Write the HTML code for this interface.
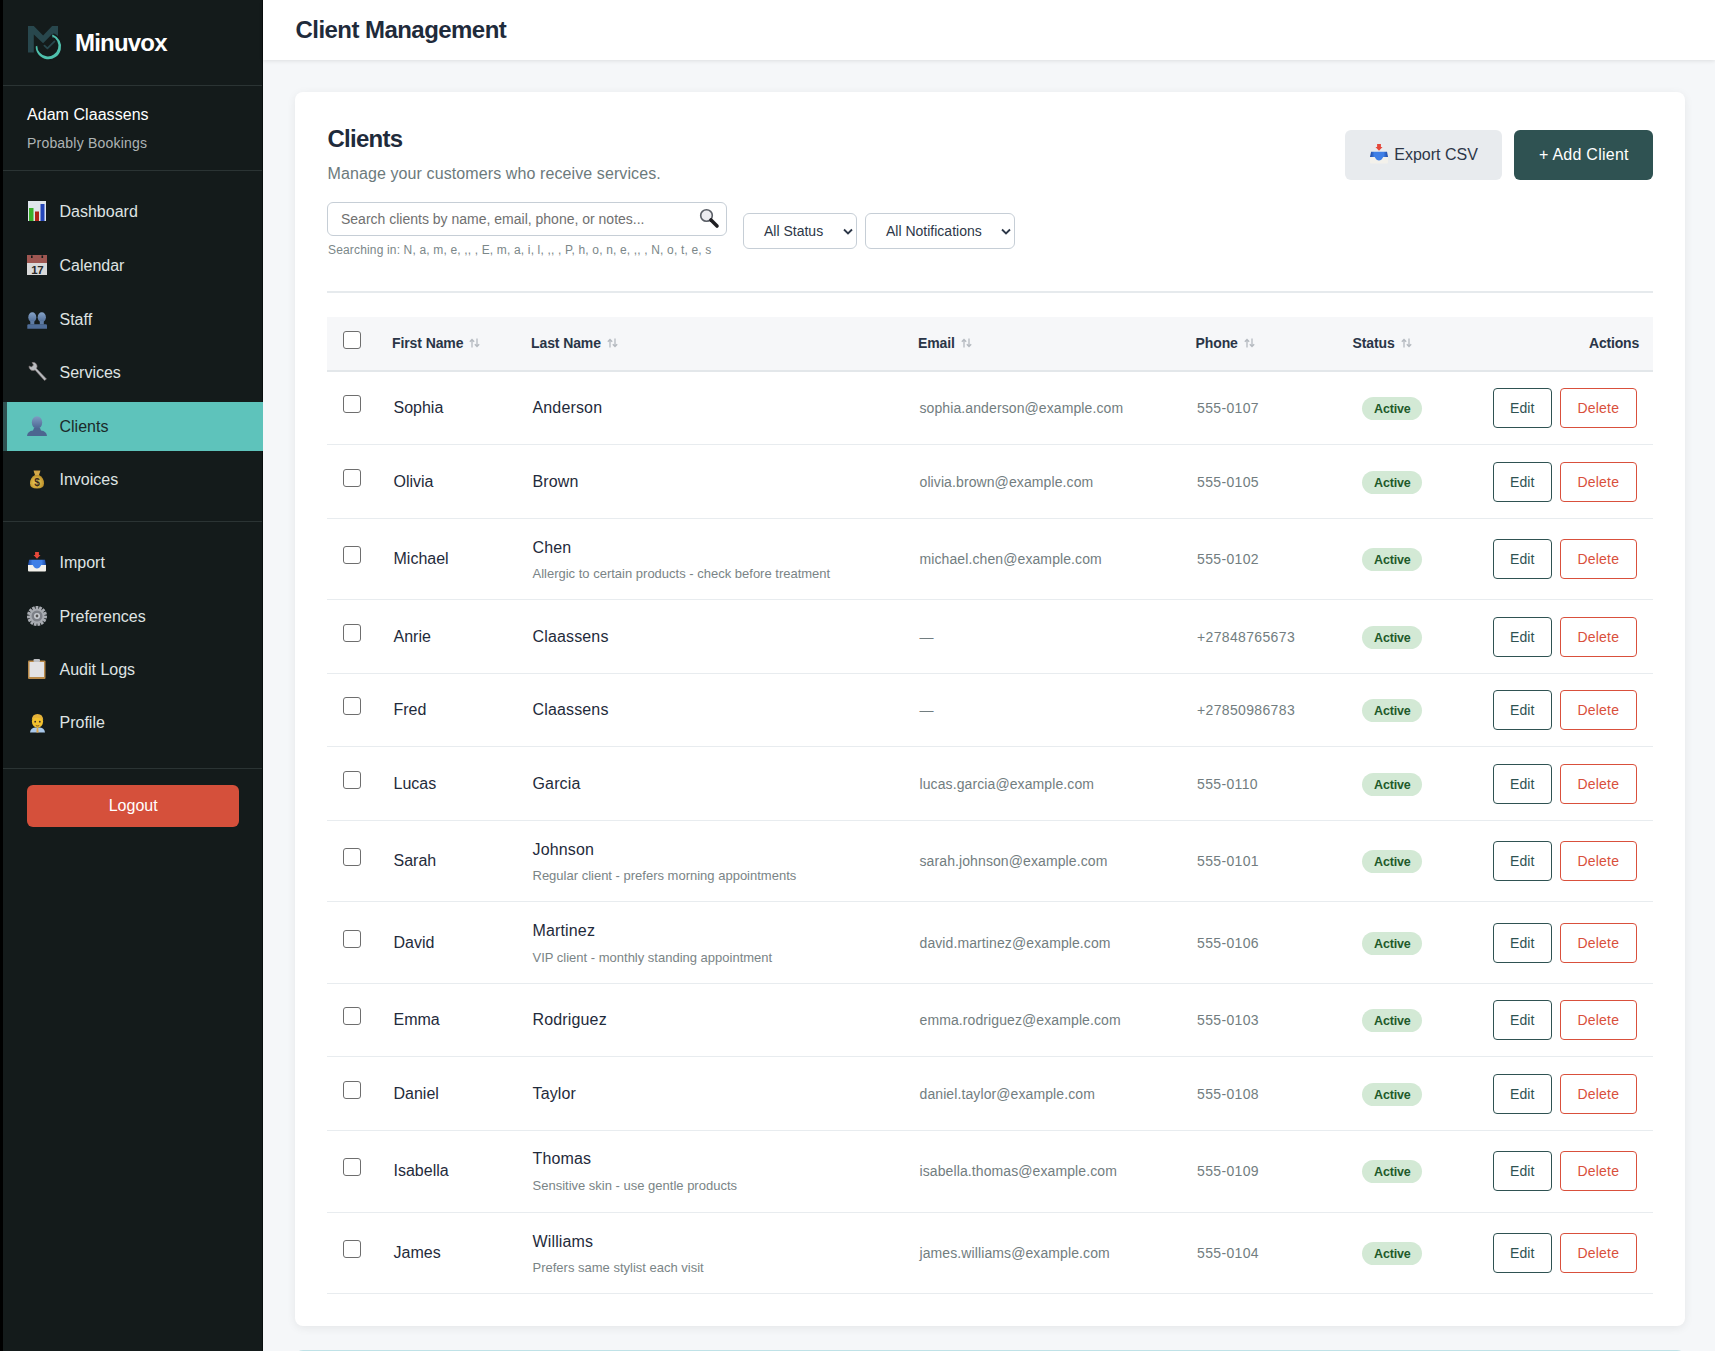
<!DOCTYPE html><html><head><meta charset="utf-8"><title>Client Management</title><style>
*{box-sizing:border-box;margin:0;padding:0}
html,body{width:1715px;height:1351px;overflow:hidden;background:#f5f7f9;font-family:"Liberation Sans",sans-serif}
.t{position:absolute;white-space:nowrap}
.r{position:absolute;display:block}
</style></head><body>
<div class="r" style="left:0px;top:0px;width:3px;height:1351px;background:#000"></div>
<div class="r" style="left:3px;top:0px;width:260px;height:1351px;background:#141b1b"></div>
<div class="r" style="left:262px;top:0px;width:1px;height:1351px;background:#0a0f0f"></div>
<svg class="r" style="left:27px;top:25px;overflow:visible" width="40" height="40" viewBox="0 0 40 40">
<path d="M1 1 H6.8 L16.1 10.5 L25.1 1 H31 V13 H25.1 V9.1 L16.1 18.2 L6.8 9.4 V27.5 H1 Z" fill="#28474d"/>
<path d="M8.7 21.6 A12.7 12.7 0 1 0 26.03 9.77" fill="none" stroke="#141b1b" stroke-width="3"/>
<path d="M8.7 21.6 A12.7 12.7 0 1 0 26.03 9.77 L24.67 10.93 A10.6 10.6 0 1 1 10.2 20.8 Z" fill="#4fc1ad"/>
<path d="M17.43 20.69 L20.39 23.35 L27.5 16.4" fill="none" stroke="#28474d" stroke-width="1.8" stroke-linecap="round" stroke-linejoin="round"/>
</svg>
<div class="t " style="left:75px;top:31px;font-size:24px;line-height:24px;color:#ffffff;font-weight:700;letter-spacing:-0.8px">Minuvox</div>
<div class="r" style="left:3px;top:85px;width:259px;height:1px;background:#2b3434"></div>
<div class="t " style="left:27px;top:107px;font-size:16px;line-height:16px;color:#ffffff;font-weight:400;letter-spacing:0.05px">Adam Claassens</div>
<div class="t " style="left:27px;top:136px;font-size:14px;line-height:14px;color:#aeb4b4;font-weight:400;letter-spacing:0.2px">Probably Bookings</div>
<div class="r" style="left:3px;top:170px;width:259px;height:1px;background:#2b3434"></div>
<svg class="r" style="left:27px;top:201px;overflow:visible" width="20" height="20" viewBox="0 0 20 20">
<rect x="1" y="0" width="18" height="20" fill="#dfe5ec"/>
<rect x="2" y="7" width="4.5" height="13" fill="#3bb02b"/>
<rect x="8" y="10.5" width="4" height="9.5" fill="#b02418"/>
<rect x="13.5" y="3" width="4" height="17" fill="#2445b8"/>
</svg>
<div class="t " style="left:59.5px;top:204px;font-size:16px;line-height:16px;color:#dfe3e3;font-weight:400;">Dashboard</div>
<svg class="r" style="left:27px;top:255px;overflow:visible" width="20" height="20" viewBox="0 0 20 20">
<rect x="0" y="0" width="20" height="20" fill="#d9d9d9"/>
<rect x="0" y="0" width="20" height="8" fill="#9f5752"/>
<rect x="4" y="0.5" width="1.6" height="2.5" fill="#151c1c"/>
<rect x="14.5" y="0.5" width="1.6" height="2.5" fill="#151c1c"/>
<text x="10.3" y="18.5" text-anchor="middle" font-family="Liberation Sans" font-weight="bold" font-size="11.5" fill="#2a2a2a" letter-spacing="-0.3">17</text>
</svg>
<div class="t " style="left:59.5px;top:258px;font-size:16px;line-height:16px;color:#dfe3e3;font-weight:400;">Calendar</div>
<svg class="r" style="left:27px;top:309px;overflow:visible" width="20" height="20" viewBox="0 0 20 20">
<defs><linearGradient id="gs" x1="0" y1="0" x2="0" y2="1"><stop offset="0" stop-color="#86a3c8"/><stop offset="1" stop-color="#4f6c96"/></linearGradient></defs>
<ellipse cx="5.3" cy="8.2" rx="4" ry="4.9" fill="url(#gs)"/>
<ellipse cx="14.8" cy="8.2" rx="4.1" ry="4.9" fill="url(#gs)"/>
<path d="M3.3 12 H7.3 V15.5 H3.3Z M12.8 12 H16.8 V15.5 H12.8Z" fill="#5e7ca5"/>
<path d="M0.3 16.5 Q0.3 15.3 1.5 15.3 H18.8 Q20 15.3 20 16.5 V19.7 H0.3 Z" fill="#4f6d98"/>
</svg>
<div class="t " style="left:59.5px;top:312px;font-size:16px;line-height:16px;color:#dfe3e3;font-weight:400;">Staff</div>
<svg class="r" style="left:27px;top:362px;overflow:visible" width="20" height="20" viewBox="0 0 20 20">
<path d="M2 4 A4 4 0 0 0 8 8 L17.5 18.5 L19.5 17 L9.5 6.5 A4 4 0 0 0 5 0.5 L6.5 3 L4.5 5 Z" fill="#b9bcc0" stroke="#7a7070" stroke-width="0.6"/>
</svg>
<div class="t " style="left:59.5px;top:365px;font-size:16px;line-height:16px;color:#dfe3e3;font-weight:400;">Services</div>
<div class="r" style="left:3px;top:402px;width:260px;height:49px;background:#5ec3bb"></div>
<div class="r" style="left:3px;top:402px;width:4px;height:49px;background:#2f5252"></div>
<svg class="r" style="left:27px;top:416px;overflow:visible" width="20" height="20" viewBox="0 0 20 20">
<defs><linearGradient id="gb" x1="0" y1="0" x2="0" y2="1"><stop offset="0" stop-color="#7f9cc3"/><stop offset="1" stop-color="#4b6591"/></linearGradient></defs>
<ellipse cx="10" cy="6.5" rx="5.2" ry="6.2" fill="url(#gb)"/>
<path d="M0 20 Q0.5 15 6 14.5 L7 12 H13 L14 14.5 Q19.5 15 20 20 Z" fill="#4c6690"/>
</svg>
<div class="t " style="left:59.5px;top:419px;font-size:16px;line-height:16px;color:#1b2a2a;font-weight:400;">Clients</div>
<svg class="r" style="left:27px;top:469px;overflow:visible" width="20" height="20" viewBox="0 0 20 20"><g transform="translate(3 0.5)">
<defs><radialGradient id="gm" cx="0.45" cy="0.55" r="0.6"><stop offset="0" stop-color="#f2d35c"/><stop offset="1" stop-color="#b88a26"/></radialGradient></defs>
<path d="M4 1 H10 L8 5 H6 Z" fill="#c99a3c"/>
<path d="M3.5 1 Q7 3 10.5 1 L9 5.5 H5 Z" fill="#d4a94a"/>
<path d="M5 5.5 H9 Q14 8 14 14 Q14 19 7 19 Q0 19 0 14 Q0 8 5 5.5 Z" fill="url(#gm)"/>
<text x="7" y="16.5" text-anchor="middle" font-family="Liberation Sans" font-weight="bold" font-size="10" fill="#3c2a1e">$</text>
</g>
</svg>
<div class="t " style="left:59.5px;top:472px;font-size:16px;line-height:16px;color:#dfe3e3;font-weight:400;">Invoices</div>
<div class="r" style="left:3px;top:521px;width:259px;height:1px;background:#2b3434"></div>
<svg class="r" style="left:27px;top:552px;overflow:visible" width="20" height="20" viewBox="0 0 20 20">
<defs><linearGradient id="gi" x1="0" y1="0" x2="1" y2="0"><stop offset="0" stop-color="#1d47a0"/><stop offset="0.25" stop-color="#3f7fe6"/><stop offset="0.75" stop-color="#3f7fe6"/><stop offset="1" stop-color="#1d47a0"/></linearGradient></defs>
<path d="M8.1 0 H11.9 V3 H13.5 L10 6.8 L6.5 3 H8.1 Z" fill="#e5483a"/>
<path d="M1 13 H19 V18.4 Q19 19.4 18 19.4 H2 Q1 19.4 1 18.4 Z" fill="#f3f1eb"/>
<path d="M2.1 7.7 H18 L19 13 H14.2 Q12.5 16.5 10 16.5 Q7.5 16.5 5.7 13 H1 Z" fill="url(#gi)"/>
</svg>
<div class="t " style="left:59.5px;top:555px;font-size:16px;line-height:16px;color:#dfe3e3;font-weight:400;">Import</div>
<svg class="r" style="left:27px;top:606px;overflow:visible" width="20" height="20" viewBox="0 0 20 20">
<g fill="#a9acb2">
<circle cx="10" cy="10" r="7.2"/>
<g id="teeth">
<rect x="8.6" y="0" width="2.8" height="4" transform="rotate(0 10 10)"/><rect x="8.6" y="0" width="2.8" height="4" transform="rotate(24 10 10)"/><rect x="8.6" y="0" width="2.8" height="4" transform="rotate(48 10 10)"/><rect x="8.6" y="0" width="2.8" height="4" transform="rotate(72 10 10)"/><rect x="8.6" y="0" width="2.8" height="4" transform="rotate(96 10 10)"/><rect x="8.6" y="0" width="2.8" height="4" transform="rotate(120 10 10)"/><rect x="8.6" y="0" width="2.8" height="4" transform="rotate(144 10 10)"/><rect x="8.6" y="0" width="2.8" height="4" transform="rotate(168 10 10)"/><rect x="8.6" y="0" width="2.8" height="4" transform="rotate(192 10 10)"/><rect x="8.6" y="0" width="2.8" height="4" transform="rotate(216 10 10)"/><rect x="8.6" y="0" width="2.8" height="4" transform="rotate(240 10 10)"/><rect x="8.6" y="0" width="2.8" height="4" transform="rotate(264 10 10)"/><rect x="8.6" y="0" width="2.8" height="4" transform="rotate(288 10 10)"/><rect x="8.6" y="0" width="2.8" height="4" transform="rotate(312 10 10)"/><rect x="8.6" y="0" width="2.8" height="4" transform="rotate(336 10 10)"/>
</g></g>
<circle cx="10" cy="10" r="5.5" fill="#7d8087"/>
<circle cx="10" cy="10" r="3" fill="#c9ccd2"/>
<circle cx="10" cy="10" r="1.4" fill="#555"/>
</svg>
<div class="t " style="left:59.5px;top:609px;font-size:16px;line-height:16px;color:#dfe3e3;font-weight:400;">Preferences</div>
<svg class="r" style="left:27px;top:659px;overflow:visible" width="20" height="20" viewBox="0 0 20 20">
<rect x="1" y="1.5" width="17.5" height="18.5" rx="1" fill="#b98a4a"/>
<rect x="2.5" y="3" width="14.5" height="15" fill="#e2e2e4"/>
<rect x="6.5" y="0" width="6.5" height="3" rx="1" fill="#bfc1c5"/>
</svg>
<div class="t " style="left:59.5px;top:662px;font-size:16px;line-height:16px;color:#dfe3e3;font-weight:400;">Audit Logs</div>
<svg class="r" style="left:27px;top:712px;overflow:visible" width="20" height="20" viewBox="0 0 20 20"><g transform="translate(3 1.5)">
<path d="M0 19 Q0.5 14.5 5 14 H10 Q14.5 14.5 15 19 Z" fill="#a9c8ea"/>
<path d="M6.8 14 H8.2 L8.6 19 H6.4 Z" fill="#e0a64a"/>
<ellipse cx="7.5" cy="8" rx="5.6" ry="6.2" fill="#f2c12e"/>
<path d="M1.8 6.5 Q2 0.5 7.5 0.5 Q13 0.5 13.2 6.5 Q10 3.5 4 4.5 Z" fill="#e5b23a"/>
<circle cx="5.2" cy="8.2" r="0.9" fill="#3a2a2a"/>
<circle cx="9.8" cy="8.2" r="0.9" fill="#3a2a2a"/>
<path d="M5.5 11.2 Q7.5 12.8 9.5 11.2 L9 12.5 Q7.5 13.5 6 12.5 Z" fill="#8a5a2a"/>
</g>
</svg>
<div class="t " style="left:59.5px;top:715px;font-size:16px;line-height:16px;color:#dfe3e3;font-weight:400;">Profile</div>
<div class="r" style="left:3px;top:768px;width:259px;height:1px;background:#2b3434"></div>
<div class="r" style="left:27px;top:785px;width:212px;height:42px;background:#d5503b;border-radius:6px"></div>
<div class="t " style="left:108.7px;top:798px;font-size:16px;line-height:16px;color:#ffffff;font-weight:400;">Logout</div>
<div class="r" style="left:263px;top:0px;width:1452px;height:60px;background:#fff;box-shadow:0 1px 4px rgba(0,0,0,0.10)"></div>
<div class="t " style="left:295.5px;top:18px;font-size:24px;line-height:24px;color:#1f2b3b;font-weight:700;letter-spacing:-0.55px">Client Management</div>
<div class="r" style="left:295px;top:92px;width:1390px;height:1234px;background:#fff;border-radius:8px;box-shadow:0 2px 10px rgba(0,0,0,0.07)"></div>
<div class="t " style="left:327.5px;top:127px;font-size:24px;line-height:24px;color:#1f2b3b;font-weight:700;letter-spacing:-0.75px">Clients</div>
<div class="t " style="left:327.5px;top:166px;font-size:16px;line-height:16px;color:#6c7a7c;font-weight:400;letter-spacing:0.1px">Manage your customers who receive services.</div>
<div class="r" style="left:327px;top:202px;width:400px;height:34px;background:#fff;border:1px solid #c6ced6;border-radius:6px"></div>
<div class="t " style="left:341px;top:212px;font-size:14px;line-height:14px;color:#707070;font-weight:400;">Search clients by name, email, phone, or notes...</div>
<svg class="r" style="left:699px;top:208px;overflow:visible" width="20" height="20" viewBox="0 0 20 20">
<circle cx="7.5" cy="7.5" r="5.8" fill="#ececf0" stroke="#5a5e66" stroke-width="1.6"/>
<path d="M12 12 L18 18" stroke="#1e1e22" stroke-width="3.6" stroke-linecap="round"/>
</svg>
<div class="t " style="left:328px;top:244px;font-size:12px;line-height:12px;color:#7b8789;font-weight:400;letter-spacing:0.16px">Searching in: N, a, m, e, ,, , E, m, a, i, l, ,, , P, h, o, n, e, ,, , N, o, t, e, s</div>
<div class="r" style="left:743px;top:213px;width:114px;height:36px;background:#fff;border:1px solid #c6ced6;border-radius:6px"></div>
<div class="t " style="left:764px;top:224px;font-size:14px;line-height:14px;color:#2d3748;font-weight:400;">All Status</div>
<svg class="r" style="left:843px;top:228px;overflow:visible" width="10" height="7" viewBox="0 0 10 7">
<path d="M1 1.5 L5 5.5 L9 1.5" fill="none" stroke="#2d3748" stroke-width="1.8"/>
</svg>
<div class="r" style="left:865px;top:213px;width:150px;height:36px;background:#fff;border:1px solid #c6ced6;border-radius:6px"></div>
<div class="t " style="left:886px;top:224px;font-size:14px;line-height:14px;color:#2d3748;font-weight:400;">All Notifications</div>
<svg class="r" style="left:1001px;top:228px;overflow:visible" width="10" height="7" viewBox="0 0 10 7">
<path d="M1 1.5 L5 5.5 L9 1.5" fill="none" stroke="#2d3748" stroke-width="1.8"/>
</svg>
<div class="r" style="left:1345px;top:130px;width:157px;height:50px;background:#e8ebee;border-radius:6px"></div>
<svg class="r" style="left:1369px;top:144px;overflow:visible" width="20" height="20" viewBox="0 0 20 20">
<defs><linearGradient id="gi" x1="0" y1="0" x2="1" y2="0"><stop offset="0" stop-color="#1d47a0"/><stop offset="0.25" stop-color="#3f7fe6"/><stop offset="0.75" stop-color="#3f7fe6"/><stop offset="1" stop-color="#1d47a0"/></linearGradient></defs>
<path d="M8.1 0 H11.9 V3 H13.5 L10 6.8 L6.5 3 H8.1 Z" fill="#e5483a"/>
<path d="M1 13 H19 V18.4 Q19 19.4 18 19.4 H2 Q1 19.4 1 18.4 Z" fill="#f3f1eb"/>
<path d="M2.1 7.7 H18 L19 13 H14.2 Q12.5 16.5 10 16.5 Q7.5 16.5 5.7 13 H1 Z" fill="url(#gi)"/>
</svg>
<div class="t " style="left:1394.3px;top:147px;font-size:16px;line-height:16px;color:#2d3748;font-weight:400;">Export CSV</div>
<div class="r" style="left:1514px;top:130px;width:139px;height:50px;background:#2f5252;border-radius:6px"></div>
<div class="t " style="left:1539px;top:147px;font-size:16px;line-height:16px;color:#ffffff;font-weight:400;letter-spacing:0.25px">+ Add Client</div>
<div class="r" style="left:327px;top:291px;width:1326px;height:2px;background:#e6eaed"></div>
<div class="r" style="left:327px;top:317px;width:1326px;height:53px;background:#f6f7f9"></div>
<div class="r" style="left:327px;top:370px;width:1326px;height:2px;background:#e3e7ea"></div>
<div class="r" style="left:343px;top:331px;width:18px;height:18px;background:#fff;border:1px solid #6e6e6e;border-radius:3px"></div>
<div class="t " style="left:392px;top:336px;font-size:14px;line-height:14px;color:#2a3547;font-weight:700;letter-spacing:-0.1px">First Name</div>
<svg class="r" style="left:469px;top:338px;overflow:visible" width="11" height="10" viewBox="0 0 11 10">
<path d="M3 9.5 V1.5 M0.8 3.8 L3 1.5 L5.2 3.8" fill="none" stroke="#b5bac0" stroke-width="1.3"/>
<path d="M8 0.5 V8.5 M5.8 6.2 L8 8.5 L10.2 6.2" fill="none" stroke="#b5bac0" stroke-width="1.3"/>
</svg>
<div class="t " style="left:531px;top:336px;font-size:14px;line-height:14px;color:#2a3547;font-weight:700;letter-spacing:-0.1px">Last Name</div>
<svg class="r" style="left:607px;top:338px;overflow:visible" width="11" height="10" viewBox="0 0 11 10">
<path d="M3 9.5 V1.5 M0.8 3.8 L3 1.5 L5.2 3.8" fill="none" stroke="#b5bac0" stroke-width="1.3"/>
<path d="M8 0.5 V8.5 M5.8 6.2 L8 8.5 L10.2 6.2" fill="none" stroke="#b5bac0" stroke-width="1.3"/>
</svg>
<div class="t " style="left:918px;top:336px;font-size:14px;line-height:14px;color:#2a3547;font-weight:700;letter-spacing:-0.1px">Email</div>
<svg class="r" style="left:961px;top:338px;overflow:visible" width="11" height="10" viewBox="0 0 11 10">
<path d="M3 9.5 V1.5 M0.8 3.8 L3 1.5 L5.2 3.8" fill="none" stroke="#b5bac0" stroke-width="1.3"/>
<path d="M8 0.5 V8.5 M5.8 6.2 L8 8.5 L10.2 6.2" fill="none" stroke="#b5bac0" stroke-width="1.3"/>
</svg>
<div class="t " style="left:1195.5px;top:336px;font-size:14px;line-height:14px;color:#2a3547;font-weight:700;letter-spacing:-0.1px">Phone</div>
<svg class="r" style="left:1244px;top:338px;overflow:visible" width="11" height="10" viewBox="0 0 11 10">
<path d="M3 9.5 V1.5 M0.8 3.8 L3 1.5 L5.2 3.8" fill="none" stroke="#b5bac0" stroke-width="1.3"/>
<path d="M8 0.5 V8.5 M5.8 6.2 L8 8.5 L10.2 6.2" fill="none" stroke="#b5bac0" stroke-width="1.3"/>
</svg>
<div class="t " style="left:1352.5px;top:336px;font-size:14px;line-height:14px;color:#2a3547;font-weight:700;letter-spacing:-0.1px">Status</div>
<svg class="r" style="left:1401px;top:338px;overflow:visible" width="11" height="10" viewBox="0 0 11 10">
<path d="M3 9.5 V1.5 M0.8 3.8 L3 1.5 L5.2 3.8" fill="none" stroke="#b5bac0" stroke-width="1.3"/>
<path d="M8 0.5 V8.5 M5.8 6.2 L8 8.5 L10.2 6.2" fill="none" stroke="#b5bac0" stroke-width="1.3"/>
</svg>
<div class="t " style="right:76px;top:336px;font-size:14px;line-height:14px;color:#2a3547;font-weight:700;letter-spacing:-0.2px">Actions</div>
<div class="r" style="left:343px;top:395px;width:18px;height:18px;background:#fff;border:1px solid #6e6e6e;border-radius:3px"></div>
<div class="t " style="left:393.5px;top:400px;font-size:16px;line-height:16px;color:#1f2b3b;font-weight:400;">Sophia</div>
<div class="t " style="left:532.5px;top:400px;font-size:16px;line-height:16px;color:#1f2b3b;font-weight:400;letter-spacing:0.15px">Anderson</div>
<div class="t " style="left:919.5px;top:401px;font-size:14px;line-height:14px;color:#727d80;font-weight:400;letter-spacing:0.1px">sophia.anderson@example.com</div>
<div class="t " style="left:1197px;top:401px;font-size:14px;line-height:14px;color:#727d80;font-weight:400;letter-spacing:0.35px">555-0107</div>
<div class="r" style="left:1362px;top:397px;width:60px;height:23px;background:#d3e9d5;border-radius:12px"></div>
<div class="t " style="left:1374px;top:403px;font-size:12.5px;line-height:12.5px;color:#1f5a2a;font-weight:700;letter-spacing:-0.15px">Active</div>
<div class="r" style="left:1493px;top:388px;width:59px;height:40px;background:#fff;border:1.5px solid #2f5252;border-radius:4px"></div>
<div class="t " style="left:1510px;top:401px;font-size:14px;line-height:14px;color:#2f5252;font-weight:400;letter-spacing:0.1px">Edit</div>
<div class="r" style="left:1560px;top:388px;width:77px;height:40px;background:#fff;border:1.5px solid #d9503c;border-radius:4px"></div>
<div class="t " style="left:1577.5px;top:401px;font-size:14px;line-height:14px;color:#d9503c;font-weight:400;letter-spacing:0.2px">Delete</div>
<div class="r" style="left:327px;top:444px;width:1326px;height:1px;background:#e8ecef"></div>
<div class="r" style="left:343px;top:469px;width:18px;height:18px;background:#fff;border:1px solid #6e6e6e;border-radius:3px"></div>
<div class="t " style="left:393.5px;top:474px;font-size:16px;line-height:16px;color:#1f2b3b;font-weight:400;">Olivia</div>
<div class="t " style="left:532.5px;top:474px;font-size:16px;line-height:16px;color:#1f2b3b;font-weight:400;letter-spacing:0.15px">Brown</div>
<div class="t " style="left:919.5px;top:475px;font-size:14px;line-height:14px;color:#727d80;font-weight:400;letter-spacing:0.1px">olivia.brown@example.com</div>
<div class="t " style="left:1197px;top:475px;font-size:14px;line-height:14px;color:#727d80;font-weight:400;letter-spacing:0.35px">555-0105</div>
<div class="r" style="left:1362px;top:471px;width:60px;height:23px;background:#d3e9d5;border-radius:12px"></div>
<div class="t " style="left:1374px;top:477px;font-size:12.5px;line-height:12.5px;color:#1f5a2a;font-weight:700;letter-spacing:-0.15px">Active</div>
<div class="r" style="left:1493px;top:462px;width:59px;height:40px;background:#fff;border:1.5px solid #2f5252;border-radius:4px"></div>
<div class="t " style="left:1510px;top:475px;font-size:14px;line-height:14px;color:#2f5252;font-weight:400;letter-spacing:0.1px">Edit</div>
<div class="r" style="left:1560px;top:462px;width:77px;height:40px;background:#fff;border:1.5px solid #d9503c;border-radius:4px"></div>
<div class="t " style="left:1577.5px;top:475px;font-size:14px;line-height:14px;color:#d9503c;font-weight:400;letter-spacing:0.2px">Delete</div>
<div class="r" style="left:327px;top:518px;width:1326px;height:1px;background:#e8ecef"></div>
<div class="r" style="left:343px;top:546px;width:18px;height:18px;background:#fff;border:1px solid #6e6e6e;border-radius:3px"></div>
<div class="t " style="left:393.5px;top:551px;font-size:16px;line-height:16px;color:#1f2b3b;font-weight:400;">Michael</div>
<div class="t " style="left:532.5px;top:540px;font-size:16px;line-height:16px;color:#1f2b3b;font-weight:400;letter-spacing:0.15px">Chen</div>
<div class="t " style="left:532.5px;top:567px;font-size:13px;line-height:13px;color:#7a8486;font-weight:400;">Allergic to certain products - check before treatment</div>
<div class="t " style="left:919.5px;top:552px;font-size:14px;line-height:14px;color:#727d80;font-weight:400;letter-spacing:0.1px">michael.chen@example.com</div>
<div class="t " style="left:1197px;top:552px;font-size:14px;line-height:14px;color:#727d80;font-weight:400;letter-spacing:0.35px">555-0102</div>
<div class="r" style="left:1362px;top:548px;width:60px;height:23px;background:#d3e9d5;border-radius:12px"></div>
<div class="t " style="left:1374px;top:554px;font-size:12.5px;line-height:12.5px;color:#1f5a2a;font-weight:700;letter-spacing:-0.15px">Active</div>
<div class="r" style="left:1493px;top:539px;width:59px;height:40px;background:#fff;border:1.5px solid #2f5252;border-radius:4px"></div>
<div class="t " style="left:1510px;top:552px;font-size:14px;line-height:14px;color:#2f5252;font-weight:400;letter-spacing:0.1px">Edit</div>
<div class="r" style="left:1560px;top:539px;width:77px;height:40px;background:#fff;border:1.5px solid #d9503c;border-radius:4px"></div>
<div class="t " style="left:1577.5px;top:552px;font-size:14px;line-height:14px;color:#d9503c;font-weight:400;letter-spacing:0.2px">Delete</div>
<div class="r" style="left:327px;top:599px;width:1326px;height:1px;background:#e8ecef"></div>
<div class="r" style="left:343px;top:624px;width:18px;height:18px;background:#fff;border:1px solid #6e6e6e;border-radius:3px"></div>
<div class="t " style="left:393.5px;top:629px;font-size:16px;line-height:16px;color:#1f2b3b;font-weight:400;">Anrie</div>
<div class="t " style="left:532.5px;top:629px;font-size:16px;line-height:16px;color:#1f2b3b;font-weight:400;letter-spacing:0.15px">Claassens</div>
<div class="t " style="left:919.5px;top:630px;font-size:14px;line-height:14px;color:#727d80;font-weight:400;letter-spacing:0.1px">—</div>
<div class="t " style="left:1197px;top:630px;font-size:14px;line-height:14px;color:#727d80;font-weight:400;letter-spacing:0.35px">+27848765673</div>
<div class="r" style="left:1362px;top:626px;width:60px;height:23px;background:#d3e9d5;border-radius:12px"></div>
<div class="t " style="left:1374px;top:632px;font-size:12.5px;line-height:12.5px;color:#1f5a2a;font-weight:700;letter-spacing:-0.15px">Active</div>
<div class="r" style="left:1493px;top:617px;width:59px;height:40px;background:#fff;border:1.5px solid #2f5252;border-radius:4px"></div>
<div class="t " style="left:1510px;top:630px;font-size:14px;line-height:14px;color:#2f5252;font-weight:400;letter-spacing:0.1px">Edit</div>
<div class="r" style="left:1560px;top:617px;width:77px;height:40px;background:#fff;border:1.5px solid #d9503c;border-radius:4px"></div>
<div class="t " style="left:1577.5px;top:630px;font-size:14px;line-height:14px;color:#d9503c;font-weight:400;letter-spacing:0.2px">Delete</div>
<div class="r" style="left:327px;top:673px;width:1326px;height:1px;background:#e8ecef"></div>
<div class="r" style="left:343px;top:697px;width:18px;height:18px;background:#fff;border:1px solid #6e6e6e;border-radius:3px"></div>
<div class="t " style="left:393.5px;top:702px;font-size:16px;line-height:16px;color:#1f2b3b;font-weight:400;">Fred</div>
<div class="t " style="left:532.5px;top:702px;font-size:16px;line-height:16px;color:#1f2b3b;font-weight:400;letter-spacing:0.15px">Claassens</div>
<div class="t " style="left:919.5px;top:703px;font-size:14px;line-height:14px;color:#727d80;font-weight:400;letter-spacing:0.1px">—</div>
<div class="t " style="left:1197px;top:703px;font-size:14px;line-height:14px;color:#727d80;font-weight:400;letter-spacing:0.35px">+27850986783</div>
<div class="r" style="left:1362px;top:699px;width:60px;height:23px;background:#d3e9d5;border-radius:12px"></div>
<div class="t " style="left:1374px;top:705px;font-size:12.5px;line-height:12.5px;color:#1f5a2a;font-weight:700;letter-spacing:-0.15px">Active</div>
<div class="r" style="left:1493px;top:690px;width:59px;height:40px;background:#fff;border:1.5px solid #2f5252;border-radius:4px"></div>
<div class="t " style="left:1510px;top:703px;font-size:14px;line-height:14px;color:#2f5252;font-weight:400;letter-spacing:0.1px">Edit</div>
<div class="r" style="left:1560px;top:690px;width:77px;height:40px;background:#fff;border:1.5px solid #d9503c;border-radius:4px"></div>
<div class="t " style="left:1577.5px;top:703px;font-size:14px;line-height:14px;color:#d9503c;font-weight:400;letter-spacing:0.2px">Delete</div>
<div class="r" style="left:327px;top:746px;width:1326px;height:1px;background:#e8ecef"></div>
<div class="r" style="left:343px;top:771px;width:18px;height:18px;background:#fff;border:1px solid #6e6e6e;border-radius:3px"></div>
<div class="t " style="left:393.5px;top:776px;font-size:16px;line-height:16px;color:#1f2b3b;font-weight:400;">Lucas</div>
<div class="t " style="left:532.5px;top:776px;font-size:16px;line-height:16px;color:#1f2b3b;font-weight:400;letter-spacing:0.15px">Garcia</div>
<div class="t " style="left:919.5px;top:777px;font-size:14px;line-height:14px;color:#727d80;font-weight:400;letter-spacing:0.1px">lucas.garcia@example.com</div>
<div class="t " style="left:1197px;top:777px;font-size:14px;line-height:14px;color:#727d80;font-weight:400;letter-spacing:0.35px">555-0110</div>
<div class="r" style="left:1362px;top:773px;width:60px;height:23px;background:#d3e9d5;border-radius:12px"></div>
<div class="t " style="left:1374px;top:779px;font-size:12.5px;line-height:12.5px;color:#1f5a2a;font-weight:700;letter-spacing:-0.15px">Active</div>
<div class="r" style="left:1493px;top:764px;width:59px;height:40px;background:#fff;border:1.5px solid #2f5252;border-radius:4px"></div>
<div class="t " style="left:1510px;top:777px;font-size:14px;line-height:14px;color:#2f5252;font-weight:400;letter-spacing:0.1px">Edit</div>
<div class="r" style="left:1560px;top:764px;width:77px;height:40px;background:#fff;border:1.5px solid #d9503c;border-radius:4px"></div>
<div class="t " style="left:1577.5px;top:777px;font-size:14px;line-height:14px;color:#d9503c;font-weight:400;letter-spacing:0.2px">Delete</div>
<div class="r" style="left:327px;top:820px;width:1326px;height:1px;background:#e8ecef"></div>
<div class="r" style="left:343px;top:848px;width:18px;height:18px;background:#fff;border:1px solid #6e6e6e;border-radius:3px"></div>
<div class="t " style="left:393.5px;top:853px;font-size:16px;line-height:16px;color:#1f2b3b;font-weight:400;">Sarah</div>
<div class="t " style="left:532.5px;top:842px;font-size:16px;line-height:16px;color:#1f2b3b;font-weight:400;letter-spacing:0.15px">Johnson</div>
<div class="t " style="left:532.5px;top:869px;font-size:13px;line-height:13px;color:#7a8486;font-weight:400;">Regular client - prefers morning appointments</div>
<div class="t " style="left:919.5px;top:854px;font-size:14px;line-height:14px;color:#727d80;font-weight:400;letter-spacing:0.1px">sarah.johnson@example.com</div>
<div class="t " style="left:1197px;top:854px;font-size:14px;line-height:14px;color:#727d80;font-weight:400;letter-spacing:0.35px">555-0101</div>
<div class="r" style="left:1362px;top:850px;width:60px;height:23px;background:#d3e9d5;border-radius:12px"></div>
<div class="t " style="left:1374px;top:856px;font-size:12.5px;line-height:12.5px;color:#1f5a2a;font-weight:700;letter-spacing:-0.15px">Active</div>
<div class="r" style="left:1493px;top:841px;width:59px;height:40px;background:#fff;border:1.5px solid #2f5252;border-radius:4px"></div>
<div class="t " style="left:1510px;top:854px;font-size:14px;line-height:14px;color:#2f5252;font-weight:400;letter-spacing:0.1px">Edit</div>
<div class="r" style="left:1560px;top:841px;width:77px;height:40px;background:#fff;border:1.5px solid #d9503c;border-radius:4px"></div>
<div class="t " style="left:1577.5px;top:854px;font-size:14px;line-height:14px;color:#d9503c;font-weight:400;letter-spacing:0.2px">Delete</div>
<div class="r" style="left:327px;top:901px;width:1326px;height:1px;background:#e8ecef"></div>
<div class="r" style="left:343px;top:930px;width:18px;height:18px;background:#fff;border:1px solid #6e6e6e;border-radius:3px"></div>
<div class="t " style="left:393.5px;top:935px;font-size:16px;line-height:16px;color:#1f2b3b;font-weight:400;">David</div>
<div class="t " style="left:532.5px;top:923px;font-size:16px;line-height:16px;color:#1f2b3b;font-weight:400;letter-spacing:0.15px">Martinez</div>
<div class="t " style="left:532.5px;top:951px;font-size:13px;line-height:13px;color:#7a8486;font-weight:400;">VIP client - monthly standing appointment</div>
<div class="t " style="left:919.5px;top:936px;font-size:14px;line-height:14px;color:#727d80;font-weight:400;letter-spacing:0.1px">david.martinez@example.com</div>
<div class="t " style="left:1197px;top:936px;font-size:14px;line-height:14px;color:#727d80;font-weight:400;letter-spacing:0.35px">555-0106</div>
<div class="r" style="left:1362px;top:932px;width:60px;height:23px;background:#d3e9d5;border-radius:12px"></div>
<div class="t " style="left:1374px;top:938px;font-size:12.5px;line-height:12.5px;color:#1f5a2a;font-weight:700;letter-spacing:-0.15px">Active</div>
<div class="r" style="left:1493px;top:923px;width:59px;height:40px;background:#fff;border:1.5px solid #2f5252;border-radius:4px"></div>
<div class="t " style="left:1510px;top:936px;font-size:14px;line-height:14px;color:#2f5252;font-weight:400;letter-spacing:0.1px">Edit</div>
<div class="r" style="left:1560px;top:923px;width:77px;height:40px;background:#fff;border:1.5px solid #d9503c;border-radius:4px"></div>
<div class="t " style="left:1577.5px;top:936px;font-size:14px;line-height:14px;color:#d9503c;font-weight:400;letter-spacing:0.2px">Delete</div>
<div class="r" style="left:327px;top:983px;width:1326px;height:1px;background:#e8ecef"></div>
<div class="r" style="left:343px;top:1007px;width:18px;height:18px;background:#fff;border:1px solid #6e6e6e;border-radius:3px"></div>
<div class="t " style="left:393.5px;top:1012px;font-size:16px;line-height:16px;color:#1f2b3b;font-weight:400;">Emma</div>
<div class="t " style="left:532.5px;top:1012px;font-size:16px;line-height:16px;color:#1f2b3b;font-weight:400;letter-spacing:0.15px">Rodriguez</div>
<div class="t " style="left:919.5px;top:1013px;font-size:14px;line-height:14px;color:#727d80;font-weight:400;letter-spacing:0.1px">emma.rodriguez@example.com</div>
<div class="t " style="left:1197px;top:1013px;font-size:14px;line-height:14px;color:#727d80;font-weight:400;letter-spacing:0.35px">555-0103</div>
<div class="r" style="left:1362px;top:1009px;width:60px;height:23px;background:#d3e9d5;border-radius:12px"></div>
<div class="t " style="left:1374px;top:1015px;font-size:12.5px;line-height:12.5px;color:#1f5a2a;font-weight:700;letter-spacing:-0.15px">Active</div>
<div class="r" style="left:1493px;top:1000px;width:59px;height:40px;background:#fff;border:1.5px solid #2f5252;border-radius:4px"></div>
<div class="t " style="left:1510px;top:1013px;font-size:14px;line-height:14px;color:#2f5252;font-weight:400;letter-spacing:0.1px">Edit</div>
<div class="r" style="left:1560px;top:1000px;width:77px;height:40px;background:#fff;border:1.5px solid #d9503c;border-radius:4px"></div>
<div class="t " style="left:1577.5px;top:1013px;font-size:14px;line-height:14px;color:#d9503c;font-weight:400;letter-spacing:0.2px">Delete</div>
<div class="r" style="left:327px;top:1056px;width:1326px;height:1px;background:#e8ecef"></div>
<div class="r" style="left:343px;top:1081px;width:18px;height:18px;background:#fff;border:1px solid #6e6e6e;border-radius:3px"></div>
<div class="t " style="left:393.5px;top:1086px;font-size:16px;line-height:16px;color:#1f2b3b;font-weight:400;">Daniel</div>
<div class="t " style="left:532.5px;top:1086px;font-size:16px;line-height:16px;color:#1f2b3b;font-weight:400;letter-spacing:0.15px">Taylor</div>
<div class="t " style="left:919.5px;top:1087px;font-size:14px;line-height:14px;color:#727d80;font-weight:400;letter-spacing:0.1px">daniel.taylor@example.com</div>
<div class="t " style="left:1197px;top:1087px;font-size:14px;line-height:14px;color:#727d80;font-weight:400;letter-spacing:0.35px">555-0108</div>
<div class="r" style="left:1362px;top:1083px;width:60px;height:23px;background:#d3e9d5;border-radius:12px"></div>
<div class="t " style="left:1374px;top:1089px;font-size:12.5px;line-height:12.5px;color:#1f5a2a;font-weight:700;letter-spacing:-0.15px">Active</div>
<div class="r" style="left:1493px;top:1074px;width:59px;height:40px;background:#fff;border:1.5px solid #2f5252;border-radius:4px"></div>
<div class="t " style="left:1510px;top:1087px;font-size:14px;line-height:14px;color:#2f5252;font-weight:400;letter-spacing:0.1px">Edit</div>
<div class="r" style="left:1560px;top:1074px;width:77px;height:40px;background:#fff;border:1.5px solid #d9503c;border-radius:4px"></div>
<div class="t " style="left:1577.5px;top:1087px;font-size:14px;line-height:14px;color:#d9503c;font-weight:400;letter-spacing:0.2px">Delete</div>
<div class="r" style="left:327px;top:1130px;width:1326px;height:1px;background:#e8ecef"></div>
<div class="r" style="left:343px;top:1158px;width:18px;height:18px;background:#fff;border:1px solid #6e6e6e;border-radius:3px"></div>
<div class="t " style="left:393.5px;top:1163px;font-size:16px;line-height:16px;color:#1f2b3b;font-weight:400;">Isabella</div>
<div class="t " style="left:532.5px;top:1151px;font-size:16px;line-height:16px;color:#1f2b3b;font-weight:400;letter-spacing:0.15px">Thomas</div>
<div class="t " style="left:532.5px;top:1179px;font-size:13px;line-height:13px;color:#7a8486;font-weight:400;">Sensitive skin - use gentle products</div>
<div class="t " style="left:919.5px;top:1164px;font-size:14px;line-height:14px;color:#727d80;font-weight:400;letter-spacing:0.1px">isabella.thomas@example.com</div>
<div class="t " style="left:1197px;top:1164px;font-size:14px;line-height:14px;color:#727d80;font-weight:400;letter-spacing:0.35px">555-0109</div>
<div class="r" style="left:1362px;top:1160px;width:60px;height:23px;background:#d3e9d5;border-radius:12px"></div>
<div class="t " style="left:1374px;top:1166px;font-size:12.5px;line-height:12.5px;color:#1f5a2a;font-weight:700;letter-spacing:-0.15px">Active</div>
<div class="r" style="left:1493px;top:1151px;width:59px;height:40px;background:#fff;border:1.5px solid #2f5252;border-radius:4px"></div>
<div class="t " style="left:1510px;top:1164px;font-size:14px;line-height:14px;color:#2f5252;font-weight:400;letter-spacing:0.1px">Edit</div>
<div class="r" style="left:1560px;top:1151px;width:77px;height:40px;background:#fff;border:1.5px solid #d9503c;border-radius:4px"></div>
<div class="t " style="left:1577.5px;top:1164px;font-size:14px;line-height:14px;color:#d9503c;font-weight:400;letter-spacing:0.2px">Delete</div>
<div class="r" style="left:327px;top:1212px;width:1326px;height:1px;background:#e8ecef"></div>
<div class="r" style="left:343px;top:1240px;width:18px;height:18px;background:#fff;border:1px solid #6e6e6e;border-radius:3px"></div>
<div class="t " style="left:393.5px;top:1245px;font-size:16px;line-height:16px;color:#1f2b3b;font-weight:400;">James</div>
<div class="t " style="left:532.5px;top:1234px;font-size:16px;line-height:16px;color:#1f2b3b;font-weight:400;letter-spacing:0.15px">Williams</div>
<div class="t " style="left:532.5px;top:1261px;font-size:13px;line-height:13px;color:#7a8486;font-weight:400;">Prefers same stylist each visit</div>
<div class="t " style="left:919.5px;top:1246px;font-size:14px;line-height:14px;color:#727d80;font-weight:400;letter-spacing:0.1px">james.williams@example.com</div>
<div class="t " style="left:1197px;top:1246px;font-size:14px;line-height:14px;color:#727d80;font-weight:400;letter-spacing:0.35px">555-0104</div>
<div class="r" style="left:1362px;top:1242px;width:60px;height:23px;background:#d3e9d5;border-radius:12px"></div>
<div class="t " style="left:1374px;top:1248px;font-size:12.5px;line-height:12.5px;color:#1f5a2a;font-weight:700;letter-spacing:-0.15px">Active</div>
<div class="r" style="left:1493px;top:1233px;width:59px;height:40px;background:#fff;border:1.5px solid #2f5252;border-radius:4px"></div>
<div class="t " style="left:1510px;top:1246px;font-size:14px;line-height:14px;color:#2f5252;font-weight:400;letter-spacing:0.1px">Edit</div>
<div class="r" style="left:1560px;top:1233px;width:77px;height:40px;background:#fff;border:1.5px solid #d9503c;border-radius:4px"></div>
<div class="t " style="left:1577.5px;top:1246px;font-size:14px;line-height:14px;color:#d9503c;font-weight:400;letter-spacing:0.2px">Delete</div>
<div class="r" style="left:327px;top:1293px;width:1326px;height:1px;background:#e8ecef"></div>
<div class="r" style="left:295px;top:1350px;width:1390px;height:20px;background:#bfe2e7;border-radius:8px"></div>
</body></html>
